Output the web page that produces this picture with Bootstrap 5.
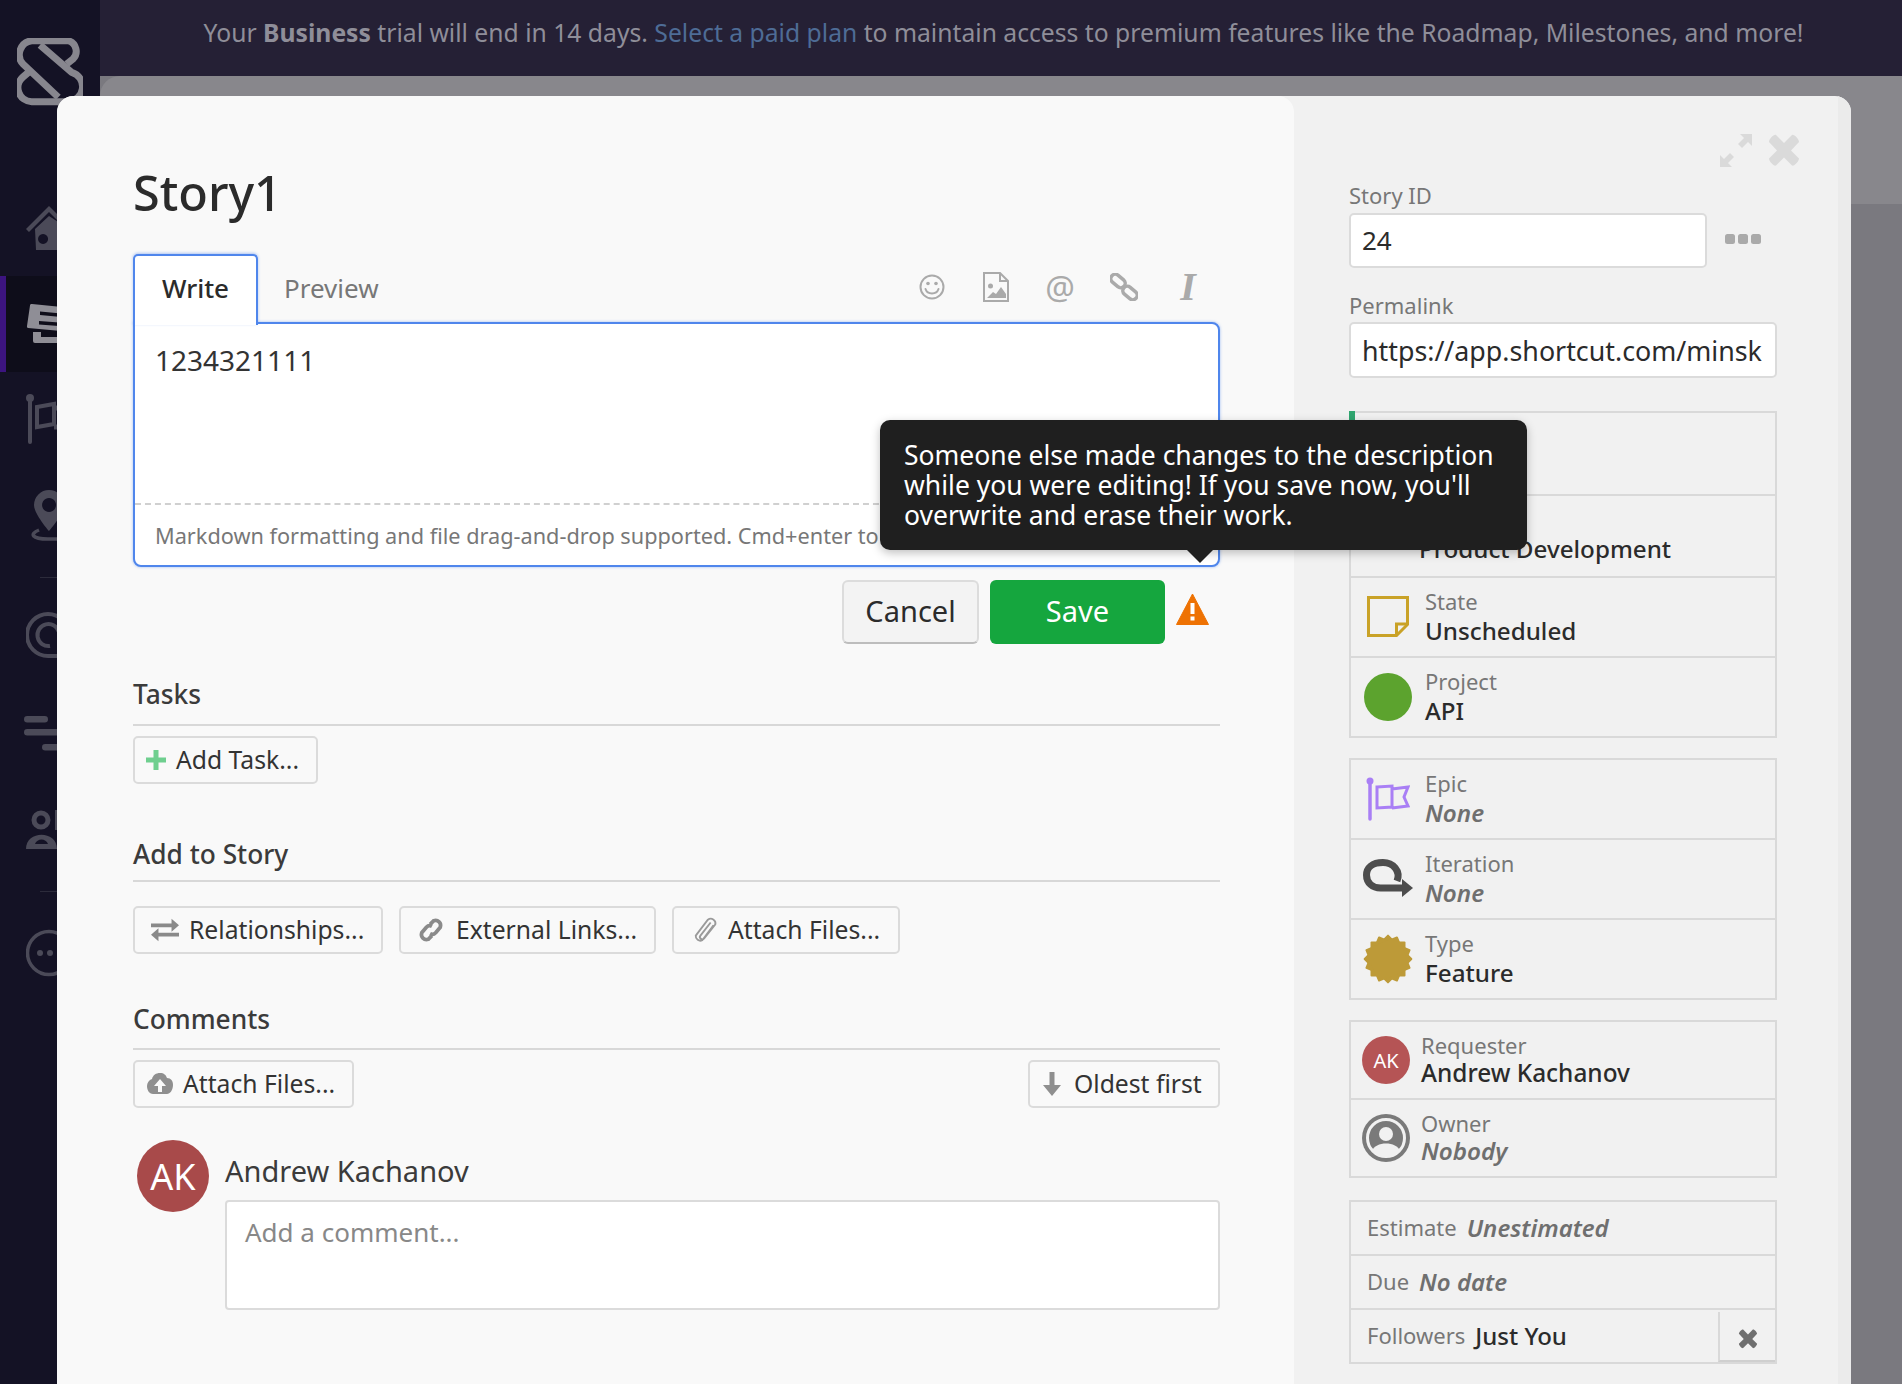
<!DOCTYPE html>
<html lang="en">
<head>
<meta charset="utf-8">
<title>Story1</title>
<link href="https://cdn.jsdelivr.net/npm/bootstrap@5.3.0/dist/css/bootstrap.min.css" rel="stylesheet">
<style>
html,body{height:1384px;overflow:hidden}
body{font-family:"Noto Sans","Open Sans",sans-serif;background:#7a797f;color:#2b2b2b;position:relative}
.app-shell{height:1384px}
.side-rail{width:100px;background:#141225;flex:none}
.rail-logo{height:104px;padding:38px 0 0 17px}
.rail-item{padding-left:26px;display:flex;align-items:center}
.rail-item.on{height:96px;background:#0e0d1a;border-left:6px solid #3c1480;padding-left:20px}
.ri-home{margin-top:77px;height:95px}
.ri-flag{height:94px}
.ri-pin{height:98px}
.ri-at{height:112px}
.ri-filter{height:86px;padding-left:24px}
.ri-people{height:108px}
.ri-chat{height:122px}
.rail-rule{height:1px;background:#2c2b3b;margin-left:40px}
.rule-a{margin-top:13px}
.rule-b{margin-top:7px}
.top-notice{height:76px;background:#252035;color:#8f8e99;font-size:24.7px;line-height:32px;padding:17px 0 0 5px;text-align:center;white-space:nowrap}
.top-notice a{color:#4e6c96;text-decoration:none}
.page-bg{background:#7a797f;border-top-left-radius:20px;overflow:hidden}
.page-head{height:128px;background:#88878c}
.story-modal{position:absolute;left:57px;top:96px;width:1794px;height:1400px;background:#f1f1f1;border-radius:16px 16px 0 0;display:flex;overflow:hidden}
.story-main{width:1237px;flex:none;background:#f9f9f9;border-top-right-radius:16px;border-top-left-radius:16px;padding:67px 74px 0 76px}
.story-title{font-size:48.500px;line-height:58px;font-weight:500;margin:0;color:#2b2b2b}
.tab-row{height:68px;margin-top:33px;position:relative;z-index:1}
.tab-on{width:125px;height:71px;background:#fff;border:2px solid #4f86ec;border-bottom:0;border-radius:5px 5px 0 0;font-size:26px;font-weight:500;line-height:64px;text-align:center;box-shadow:0 -1px 3px rgba(79,134,236,.45)}
.tab-off{font-size:26px;color:#777;padding-left:26px;line-height:68px}
.tool-set{margin-left:auto;width:320px}
.tool-cell{width:64px;height:66px;display:flex;align-items:center;justify-content:center}
.tool-at{font-size:33px;color:#aaa;line-height:1}
.tool-i{font-family:"Liberation Serif",serif;font-style:italic;font-weight:700;font-size:40px;color:#aaa;line-height:1}
.edit-box{height:245px;background:#fff;border:2px solid #4f86ec;border-radius:0 8px 8px 8px;box-shadow:0 0 3px rgba(79,134,236,.55);display:flex;flex-direction:column}
.edit-area{flex:1;border:0;outline:0;resize:none;padding:18px 20px;font-family:inherit;font-size:28px;line-height:36px;color:#333;background:transparent;border-radius:8px}
.edit-foot{height:62px;border-top:2px dashed #d0d0d0;padding:0 20px;font-size:21.700px;line-height:62px;color:#777;white-space:nowrap;overflow:hidden}
.act-row{margin-top:13px;height:64px;padding-right:11px}
.act-btn{height:64px;font-size:29px;line-height:1;border-radius:6px;padding:0 0 3px}
.act-cancel{width:137px;background:#f3f3f3;border:2px solid #dcdcdc;border-bottom-color:#bdbdbd;color:#2b2b2b}
.act-save{width:175px;margin-left:11px;background:#15a63e;border:0;color:#fff}
.act-warn{margin-left:11px;margin-bottom:6px}
.sec-head{font-size:26.300px;line-height:34px;font-weight:500;color:#3b3b3b;border-bottom:2px solid #d8d8d8}
.sec-tasks{margin-top:33px;padding-bottom:13px}
.sec-add{margin-top:53px;padding-bottom:9px}
.sec-comments{margin-top:48px;padding-bottom:12px}
.lite-btn{height:48px;font-size:24.700px;line-height:1;color:#333;background:#f9f9f9;border:2px solid #dbdbdb;border-radius:5px;padding:0;display:inline-flex;align-items:center;justify-content:flex-start;white-space:nowrap}
.b-task{width:185px;margin-top:10px;padding-left:11px;gap:10px}
.add-row{gap:16px;margin-top:24px}
.b-rel{width:250px;padding-left:16px;gap:10px}
.b-ext{width:257px;padding-left:17px;gap:12px}
.b-att{width:228px;padding-left:19px;gap:9px}
.cmt-tools{margin-top:10px}
.b-att2{width:221px;padding-left:12px;gap:10px}
.b-old{width:192px;padding-left:12px;gap:12px}
.cmt-row{margin-top:32px;gap:16px}
.cmt-col{padding-top:14px}
.comment-avatar{width:72px;height:72px;border-radius:50%;background:#a84a4a;color:#fff;font-size:36px;padding-top:2px;display:flex;align-items:center;justify-content:center;margin-left:4px;flex:none}
.comment-name{font-size:29px;line-height:34px;color:#3b3b3b}
.comment-box{height:110px;margin-top:12px;border:2px solid #dbdbdb;border-radius:4px;background:#fff;font-size:26px;padding:12px 18px;line-height:36px;resize:none;display:block;width:100%;font-family:inherit;outline:0}
.comment-box::placeholder{color:#888}
.story-side{width:544px;flex:none;padding:38px 61px 0 55px}
.side-strip{width:13px;background:#ebebeb;flex:none}
.win-tools{height:33px;gap:16px;margin-right:-23px}
.field-cap{font-size:22px;line-height:30px;color:#777}
.cap-id{margin-top:13px}
.cap-link{margin-top:22px}
.id-row{margin-top:3px;height:55px}
.field-input{height:55px;border:2px solid #dbdbdb;border-radius:5px;background:#fff;font-size:26px;padding:0 11px;color:#2b2b2b;font-family:inherit;outline:0;width:100%}
.input-id{width:358px;padding-bottom:2px}
.input-link{height:56px;margin-top:2px;font-size:26.800px}
.more-dots{margin-left:18px;margin-bottom:3px;flex:none}
.meta-group{border:2px solid #d9d9d9}
.mg-a{margin-top:33px}
.mg-b{margin-top:20px}
.mg-d{margin-top:22px}
.meta-row{display:flex;align-items:center;border-bottom:2px solid #d9d9d9;position:relative}
.meta-row:last-child{border-bottom:0}
.h-83{height:83px}.h-82{height:82px}.h-80{height:80px}.h-78{height:78px}.h-76{height:76px}.h-54{height:54px}.h-52{height:52px}
.meta-ico{width:74px;flex:none;display:flex;justify-content:center;padding-left:0}
.meta-ico-wf{width:68px}
.meta-ico-sm{width:70px}
.meta-txt{padding-bottom:2px}
.meta-wf{padding-top:27px}
.meta-cap{font-size:22px;line-height:29px;color:#777}
.meta-val{font-size:24.200px;line-height:29px;font-weight:500;color:#2b2b2b}
.tight .meta-cap,.tight .meta-val{line-height:27px}
.meta-person{font-size:24.400px}
.meta-none{font-style:italic;font-weight:600;color:#6f6f6f}
.meta-line{padding:0 0 2px 16px;gap:10px;font-size:22px;color:#777}
.meta-line .meta-val{font-size:24px}
.mini-avatar{width:48px;height:48px;border-radius:50%;background:#b55455;color:#fff;font-size:20px;padding-top:1px;display:flex;align-items:center;justify-content:center}
.green-tag{position:absolute;left:-2px;top:-2px;bottom:0;width:6px;background:#2fa56f}
.x-cell{position:absolute;right:0;top:2px;bottom:0;width:57px;padding-top:6px;border-left:2px solid #d9d9d9;border-bottom:2px solid #cfcfcf;display:flex;align-items:center;justify-content:center}
.warn-tip{position:absolute;left:823px;top:324px;width:647px;height:130px;padding:20px 24px;background:#1f1f1f;color:#fff;font-size:26.500px;line-height:30px;border-radius:10px;box-shadow:0 3px 10px rgba(0,0,0,.25);z-index:5}
.warn-tip::after{content:"";position:absolute;left:307px;bottom:-13px;border:13px solid transparent;border-bottom:0;border-top-color:#1f1f1f}
</style>
</head>
<body>
<div class="app-shell d-flex">
  <aside class="side-rail">
    <div class="rail-logo">
      <svg width="66" height="70" viewBox="0 0 66 70" fill="none" stroke="#87868e" stroke-width="7" stroke-linejoin="round"><path d="M23 7L54.700 34.300A15 15 0 0 1 51.300 63.700H14.700A14 14 0 0 1 6 39L13 33"/><path d="M49.700 26L56 21A11 11 0 0 0 51.300 2.700H14.700A14 14 0 0 0 6 26L41.300 59.300"/></svg>
    </div>
    <div class="rail-item ri-home"><svg width="46" height="46" viewBox="0 0 46 46" fill="#4b4a58"><path d="M0 23L23 0l23 23-3 3L23 6 3 26z"/><path fill-rule="evenodd" d="M9 23L23 10l23 15v19H10zm8 5a5 5 0 1 0 .1 0z"/></svg></div>
    <div class="rail-item on"><svg width="46" height="46" viewBox="0 0 46 46" fill="#8f8e96"><path d="M6 3L46 7V31L2 27a1.500 1.500 0 0 1-1-2L4 4.500a1.500 1.500 0 0 1 2-1.500z"/><path d="M7 31h8v5h31v6H9a2 2 0 0 1-2-2z"/><path d="M14 10.500l32 3v3.500l-32-3zM13 20l20 1.500v3.500l-20-1.500z" fill="#0e0d1a"/></svg></div>
    <div class="rail-item ri-flag"><svg width="46" height="50" viewBox="0 0 46 50" fill="none" stroke="#4b4a58" stroke-width="4"><path d="M4 5v43" stroke-linecap="round"/><circle cx="4" cy="4" r="4" fill="#4b4a58" stroke="none"/><path d="M11 13l17-3v20l-17 3z"/><path d="M28 14h18v19H28" stroke-width="5"/></svg></div>
    <div class="rail-item ri-pin"><svg width="46" height="52" viewBox="0 0 46 52" fill="#4b4a58"><path fill-rule="evenodd" d="M23 1a15 15 0 0 1 15 15c0 9-15 26-15 26S8 25 8 16A15 15 0 0 1 23 1zm0 8a7 7 0 1 0 .1 0z"/><path d="M13 41c-10 4-7 9 9 9h24" fill="none" stroke="#4b4a58" stroke-width="3.500"/></svg></div>
    <div class="rail-rule rule-a"></div>
    <div class="rail-item ri-at"><svg width="46" height="48" viewBox="0 0 46 48" fill="none" stroke="#4b4a58" stroke-width="4"><path d="M46 46H22A21 21 0 1 1 43 25"/><path d="M24 36A11 11 0 1 1 33 22"/></svg></div>
    <div class="rail-item ri-filter"><svg width="46" height="36" viewBox="0 0 46 36" fill="#4b4a58"><rect y="1" width="24" height="6.500" rx="3.250"/><rect y="14" width="46" height="6.500" rx="3.250"/><rect x="18" y="29" width="28" height="6.500" rx="3.250"/></svg></div>
    <div class="rail-item ri-people"><svg width="46" height="44" viewBox="0 0 46 44" fill="#4b4a58"><circle cx="15" cy="12" r="7" fill="none" stroke="#4b4a58" stroke-width="5"/><path fill-rule="evenodd" d="M0 41c0-19 31-19 31 0zm9-5h13c-2-6-11-6-13 0z"/><path d="M29 2h17v20H29z"/></svg></div>
    <div class="rail-rule rule-b"></div>
    <div class="rail-item ri-chat"><svg width="46" height="48" viewBox="0 0 46 48"><circle cx="23" cy="24" r="21.500" fill="none" stroke="#4b4a58" stroke-width="3.500"/><circle cx="14" cy="24" r="3" fill="#4b4a58"/><circle cx="24" cy="24" r="3" fill="#4b4a58"/></svg></div>
  </aside>
  <main class="flex-grow-1 d-flex flex-column">
    <div class="top-notice">Your <b>Business</b> trial will end in 14 days. <a href="#">Select a paid plan</a> to maintain access to premium features like the Roadmap, Milestones, and more!</div>
    <div class="page-bg flex-grow-1"><div class="page-head"></div></div>
  </main>
</div>

<div class="story-modal">
  <section class="story-main">
    <h1 class="story-title">Story1</h1>
    <div class="tab-row d-flex">
      <div class="tab-on">Write</div>
      <div class="tab-off">Preview</div>
      <div class="tool-set d-flex">
        <span class="tool-cell"><svg width="26" height="26" viewBox="0 0 26 26" fill="none" stroke="#aaa" stroke-width="2"><circle cx="13" cy="13" r="11.500"/><path d="M6.500 15c2 6 11 6 13 0" stroke-linecap="round"/><circle cx="9" cy="9.500" r="1.800" fill="#aaa" stroke="none"/><circle cx="17" cy="9.500" r="1.800" fill="#aaa" stroke="none"/></svg></span>
        <span class="tool-cell"><svg width="26" height="30" viewBox="0 0 26 30" fill="none" stroke="#aaa" stroke-width="2"><path d="M1 1h16l8 8v20H1zM17 1v8h8"/><circle cx="7.500" cy="14" r="2.500" fill="#aaa" stroke="none"/><path d="M4 26l6-6 3 2 5-7 5 7v4z" fill="#aaa" stroke="none"/></svg></span>
        <span class="tool-cell tool-at">@</span>
        <span class="tool-cell"><svg width="28" height="28" viewBox="0 0 28 28" fill="none" stroke="#aaa" stroke-width="3.500"><rect x="0" y="3.500" width="16" height="9" rx="4.500" transform="rotate(40 8 8)"/><rect x="12" y="15.500" width="16" height="9" rx="4.500" transform="rotate(40 20 20)"/></svg></span>
        <span class="tool-cell tool-i">I</span>
      </div>
    </div>
    <div class="edit-box">
      <textarea class="edit-area">1234321111</textarea>
      <div class="edit-foot">Markdown formatting and file drag-and-drop supported. Cmd+enter to</div>
    </div>
    <div class="act-row d-flex justify-content-end align-items-center">
      <button class="btn act-btn act-cancel">Cancel</button>
      <button class="btn act-btn act-save">Save</button>
      <svg class="act-warn" width="33" height="33" viewBox="0 0 33 33"><path d="M16.500 1L32.500 31.500H.5z" fill="#ee7203" stroke="#ee7203" stroke-linejoin="round"/><rect x="14.500" y="10" width="4" height="11" fill="#fff"/><rect x="14.500" y="23.500" width="4" height="4" fill="#fff"/></svg>
    </div>

    <div class="sec-head sec-tasks">Tasks</div>
    <button class="btn lite-btn b-task"><svg width="20" height="20" viewBox="0 0 20 20" fill="#6fcf8f"><path d="M7.500 0h5v7.500h7.500v5h-7.500v7.500h-5v-7.500H0v-5h7.500z"/></svg>Add Task...</button>

    <div class="sec-head sec-add">Add to Story</div>
    <div class="d-flex add-row">
      <button class="btn lite-btn b-rel"><svg width="28" height="26" viewBox="0 0 30 26" fill="#8a8a8a"><path d="M0 6h22V1l8 7-8 7v-5H0zM30 16H8v-5l-8 7 8 7v-5h22z"/></svg>Relationships...</button>
      <button class="btn lite-btn b-ext"><svg width="26" height="26" viewBox="0 0 26 28" fill="none" stroke="#8a8a8a" stroke-width="4"><path d="M12 8l4-4a5.500 5.500 0 0 1 7 7l-5 6a5 5 0 0 1-6 1"/><path d="M14 20l-4 4a5.500 5.500 0 0 1-7-7l5-6a5 5 0 0 1 6-1"/></svg>External Links...</button>
      <button class="btn lite-btn b-att"><svg width="26" height="28" viewBox="0 0 26 30" fill="none" stroke="#9a9a9a" stroke-width="2"><path d="M21 10L9 26a5 5 0 0 1-7-5L15 4a5 5 0 0 1 8 5L11 24a2.500 2.500 0 0 1-4-3L18 7"/></svg>Attach Files...</button>
    </div>

    <div class="sec-head sec-comments">Comments</div>
    <div class="d-flex justify-content-between cmt-tools">
      <button class="btn lite-btn b-att2"><svg width="26" height="24" viewBox="0 0 26 24" fill="#8f8f8f"><path d="M13 1c4 0 6 2 7 5 4 0 6 3 6 7 0 5-3 9-6 9H6c-3 0-6-3-6-8 0-3 2-6 5-7 1-4 4-6 8-6z"/><path d="M13 7l6 7h-4v6h-4v-6H7z" fill="#f9f9f9"/></svg>Attach Files...</button>
      <button class="btn lite-btn b-old"><svg width="20" height="24" viewBox="0 0 20 24" fill="#8f8f8f"><path d="M7.500 0h5v13H19l-9 11L1 13h6.500z"/></svg>Oldest first</button>
    </div>
    <div class="d-flex cmt-row">
      <div class="comment-avatar">AK</div>
      <div class="flex-grow-1 cmt-col">
        <div class="comment-name">Andrew Kachanov</div>
        <textarea class="comment-box" placeholder="Add a comment..."></textarea>
      </div>
    </div>
  </section>

  <section class="story-side">
    <div class="win-tools d-flex justify-content-end">
      <svg width="32" height="33" viewBox="0 0 32 33" fill="#dadada"><path d="M32 0v12l-4-4-6 6-4-4 6-6-4-4zM0 33V21l4 4 6-6 4 4-6 6 4 4z"/></svg>
      <svg width="32" height="33" viewBox="0 0 32 33" fill="#dadada"><path d="M8 1l8 8 8-8c2-1 7 4 7 7l-8 8.500 8 8c0 3-5 8-7 7l-8-8-8 8c-2 1-7-4-7-7l8-8L1 8c0-3 5-8 7-7z"/></svg>
    </div>
    <div class="field-cap cap-id">Story ID</div>
    <div class="d-flex align-items-center id-row">
      <input class="field-input input-id" value="24" readonly>
      <svg class="more-dots" width="36" height="10" viewBox="0 0 36 10" fill="#aaa"><rect width="10" height="10" rx="2.500"/><rect x="13" width="10" height="10" rx="2.500"/><rect x="26" width="10" height="10" rx="2.500"/></svg>
    </div>
    <div class="field-cap cap-link">Permalink</div>
    <input class="field-input input-link" value="https://app.shortcut.com/minsk" readonly>

    <div class="meta-group mg-a">
      <div class="meta-row h-83"><span class="green-tag"></span></div>
      <div class="meta-row h-82">
        <span class="meta-ico meta-ico-wf"><svg width="30" height="30" viewBox="0 0 30 30" fill="#7a7a7a"><rect x="2" y="22" width="26" height="4" rx="2"/></svg></span>
        <div class="meta-txt meta-wf"><div class="meta-val">Product Development</div></div>
      </div>
      <div class="meta-row h-80">
        <span class="meta-ico"><svg width="42" height="42" viewBox="0 0 42 42" fill="none" stroke="#c9a227" stroke-width="3"><path d="M1.500 1.500h39v27l-11 11h-28z"/><path d="M40 28H29.500v11"/></svg></span>
        <div class="meta-txt"><div class="meta-cap">State</div><div class="meta-val">Unscheduled</div></div>
      </div>
      <div class="meta-row h-78">
        <span class="meta-ico"><svg width="48" height="48" viewBox="0 0 48 48"><circle cx="24" cy="24" r="24" fill="#5ca32e"/></svg></span>
        <div class="meta-txt"><div class="meta-cap">Project</div><div class="meta-val">API</div></div>
      </div>
    </div>

    <div class="meta-group mg-b">
      <div class="meta-row h-80">
        <span class="meta-ico"><svg width="44" height="44" viewBox="0 0 44 44" fill="none" stroke="#a97ff5" stroke-width="3"><path d="M4 6v36" stroke-width="3.500" stroke-linecap="round"/><circle cx="4" cy="4" r="3.500" fill="#a97ff5" stroke="none"/><path d="M11 10l15-1v21l-15 1zM26 12l16-2-4 10 4 9-16 2"/></svg></span>
        <div class="meta-txt"><div class="meta-cap">Epic</div><div class="meta-val meta-none">None</div></div>
      </div>
      <div class="meta-row h-80">
        <span class="meta-ico"><svg width="50" height="40" viewBox="0 0 50 40" fill="none" stroke="#4d4d4d" stroke-width="7"><path d="M34 22C38 12 30 3.500 20 3.500 9 3.500 3.500 9 3.500 16c0 8 6 13 14 13h25"/><path d="M39 20l11 9-11 9z" fill="#4d4d4d" stroke="none"/></svg></span>
        <div class="meta-txt"><div class="meta-cap">Iteration</div><div class="meta-val meta-none">None</div></div>
      </div>
      <div class="meta-row h-78">
        <span class="meta-ico"><svg width="50" height="50" viewBox="0 0 50 50" fill="#bd9a38"><rect x="7.500" y="7.500" width="35" height="35" rx="1"/><rect x="7.500" y="7.500" width="35" height="35" rx="1" transform="rotate(22.500 25 25)"/><rect x="7.500" y="7.500" width="35" height="35" rx="1" transform="rotate(45 25 25)"/><rect x="7.500" y="7.500" width="35" height="35" rx="1" transform="rotate(67.500 25 25)"/></svg></span>
        <div class="meta-txt"><div class="meta-cap">Type</div><div class="meta-val">Feature</div></div>
      </div>
    </div>

    <div class="meta-group mg-b">
      <div class="meta-row h-78">
        <span class="meta-ico meta-ico-sm"><span class="mini-avatar">AK</span></span>
        <div class="meta-txt tight"><div class="meta-cap">Requester</div><div class="meta-val meta-person">Andrew Kachanov</div></div>
      </div>
      <div class="meta-row h-76">
        <span class="meta-ico meta-ico-sm"><svg width="48" height="48" viewBox="0 0 48 48"><circle cx="24" cy="24" r="24" fill="#7a7a7a"/><circle cx="24" cy="24" r="18.500" fill="none" stroke="#f1f1f1" stroke-width="3"/><circle cx="24" cy="20" r="7" fill="#f1f1f1"/><path d="M10 37c3-10 25-10 28 0a19 19 0 0 1-28 0z" fill="#f1f1f1"/></svg></span>
        <div class="meta-txt tight"><div class="meta-cap">Owner</div><div class="meta-val meta-none">Nobody</div></div>
      </div>
    </div>

    <div class="meta-group mg-d">
      <div class="meta-row meta-line h-54">Estimate <span class="meta-val meta-none">Unestimated</span></div>
      <div class="meta-row meta-line h-54">Due <span class="meta-val meta-none">No date</span></div>
      <div class="meta-row meta-line h-52">Followers <span class="meta-val">Just You</span>
        <span class="x-cell"><svg width="20" height="20" viewBox="0 0 32 33" fill="#6f6f6f"><path d="M8 1l8 8 8-8c2-1 7 4 7 7l-8 8.500 8 8c0 3-5 8-7 7l-8-8-8 8c-2 1-7-4-7-7l8-8L1 8c0-3 5-8 7-7z"/></svg></span>
      </div>
    </div>
  </section>
  <div class="side-strip"></div>
  <div class="warn-tip">Someone else made changes to the description while you were editing! If you save now, you'll overwrite and erase their work.</div>
</div>
<script src="https://cdn.jsdelivr.net/npm/bootstrap@5.3.0/dist/js/bootstrap.bundle.min.js"></script>
</body>
</html>
